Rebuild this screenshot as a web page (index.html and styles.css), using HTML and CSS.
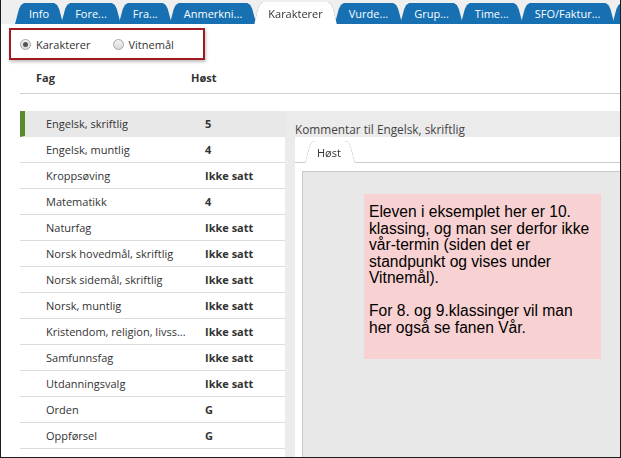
FILE: index.html
```html
<!DOCTYPE html>
<html lang="no">
<head>
<meta charset="utf-8">
<title>Karakterer</title>
<link rel="stylesheet" href="styles.css">
</head>
<body>
<div class="page">
  <ul class="tabs">
    <li class="tab"><a>Info</a></li>
    <li class="tab"><a>Fore...</a></li>
    <li class="tab"><a>Fra...</a></li>
    <li class="tab"><a>Anmerkni...</a></li>
    <li class="tab active"><a>Karakterer</a></li>
    <li class="tab"><a>Vurde...</a></li>
    <li class="tab"><a>Grup...</a></li>
    <li class="tab"><a>Time...</a></li>
    <li class="tab"><a>SFO/Faktur...</a></li>
    <li class="tab more"><a></a></li>
  </ul>

  <div class="modes">
    <label class="radio checked"><span class="dot"></span>Karakterer</label>
    <label class="radio"><span class="dot"></span>Vitnemål</label>
  </div>

  <div class="main">
    <div class="head">
      <span class="col-name">Fag</span>
      <span class="col-grade">Høst</span>
    </div>
    <div class="body">
      <ul class="subjects">
        <li class="row selected"><span class="name">Engelsk, skriftlig</span><span class="grade">5</span></li>
        <li class="row"><span class="name">Engelsk, muntlig</span><span class="grade">4</span></li>
        <li class="row"><span class="name">Kroppsøving</span><span class="grade">Ikke satt</span></li>
        <li class="row"><span class="name">Matematikk</span><span class="grade">4</span></li>
        <li class="row"><span class="name">Naturfag</span><span class="grade">Ikke satt</span></li>
        <li class="row"><span class="name">Norsk hovedmål, skriftlig</span><span class="grade">Ikke satt</span></li>
        <li class="row"><span class="name">Norsk sidemål, skriftlig</span><span class="grade">Ikke satt</span></li>
        <li class="row"><span class="name">Norsk, muntlig</span><span class="grade">Ikke satt</span></li>
        <li class="row"><span class="name">Kristendom, religion, livss...</span><span class="grade">Ikke satt</span></li>
        <li class="row"><span class="name">Samfunnsfag</span><span class="grade">Ikke satt</span></li>
        <li class="row"><span class="name">Utdanningsvalg</span><span class="grade">Ikke satt</span></li>
        <li class="row"><span class="name">Orden</span><span class="grade">G</span></li>
        <li class="row"><span class="name">Oppførsel</span><span class="grade">G</span></li>
        <li class="row"><span class="name"></span><span class="grade"></span></li>
      </ul>
      <section class="comment">
        <div class="comment-title">Kommentar til Engelsk, skriftlig</div>
        <div class="comment-box">
          <div class="subtabs"><div class="subtab"><span>Høst</span></div></div>
          <div class="comment-area">
            <div class="note">
              <p>Eleven i eksemplet her er 10.<br>klassing, og man ser derfor ikke<br>vår-termin (siden det er<br>standpunkt og vises under<br>Vitnemål).</p>
              <p>For 8. og 9.klassinger vil man<br>her også se fanen Vår.</p>
            </div>
          </div>
        </div>
      </section>
    </div>
  </div>
</div>
</body>
</html>
```

FILE: styles.css
```css
* {
  box-sizing: border-box;
  margin: 0;
  padding: 0;
}

html, body {
  width: 621px;
  height: 458px;
  overflow: hidden;
}

body {
  font-family: "Open Sans", "Liberation Sans", sans-serif;
  color: #333;
  background: #fff;
}

.page {
  width: 621px;
  height: 458px;
  border: 1px solid #1c1c1c;
  border-top: 0;
  display: flex;
  flex-direction: column;
  overflow: hidden;
}

/* top tab strip */
.tabs {
  flex: none;
  height: 24px;
  background: #efefef;
  display: flex;
  align-items: flex-end;
  padding-left: 14px;
  list-style: none;
  white-space: nowrap;
}

.tab {
  flex: none;
  margin-right: -2px;
}

.tab a {
  display: block;
  height: 21px;
  line-height: 21px;
  padding: 0 14px;
  font-size: 11px;
  color: #fff;
  background: #1670b2;
  clip-path: polygon(0 100%, 4px 6px, 6px 2px, 9px 0, calc(100% - 9px) 0, calc(100% - 6px) 2px, calc(100% - 4px) 6px, 100% 100%);
}

.tab.more a {
  width: 60px;
}

.tab.active {
  position: relative;
  z-index: 1;
  filter: drop-shadow(0 0 0.6px rgba(0, 0, 0, 0.55));
}

.tab.active a {
  height: 22px;
  line-height: 23px;
  background: #fff;
  color: #333;
}

/* radio group */
.modes {
  flex: none;
  margin: 4px 0 0 8px;
  width: 196px;
  height: 32px;
  border: 2px solid #a01a20;
  box-shadow: 1px 2px 3px rgba(0, 0, 0, 0.25);
  display: flex;
  align-items: center;
  padding-left: 9px;
  gap: 22px;
  font-size: 11px;
}

.radio {
  display: flex;
  align-items: center;
  gap: 5px;
}

.dot {
  width: 11px;
  height: 11px;
  border-radius: 50%;
  border: 1px solid #a8a8a8;
  background: linear-gradient(#f4f4f4, #d9d9d9);
  display: flex;
  align-items: center;
  justify-content: center;
}

.radio.checked .dot::after {
  content: "";
  width: 5px;
  height: 5px;
  border-radius: 50%;
  background: #555;
}

/* main table */
.main {
  flex: 1;
  margin-left: 19px;
  display: flex;
  flex-direction: column;
  min-height: 0;
}

.head {
  flex: none;
  height: 33px;
  margin-top: 1px;
  display: flex;
  align-items: center;
  font-size: 11px;
  font-weight: bold;
  border-bottom: 1px solid #cfcfcf;
}

.head .col-name {
  width: 171px;
  padding-left: 16px;
}

.body {
  flex: 1;
  margin-top: 17px;
  background: #ebebeb;
  display: flex;
  min-height: 0;
}

.subjects {
  flex: none;
  width: 265px;
  list-style: none;
  background: #fff;
}

.row {
  height: 26px;
  display: flex;
  align-items: center;
  border-bottom: 1px solid #dcdcdc;
  font-size: 11px;
  padding-left: 26px;
}

.row.selected {
  background: #e8e8e8;
  border-left: 5px solid #5a8a2c;
  padding-left: 21px;
  border-bottom-color: #e8e8e8;
}

.row .name {
  width: 159px;
  white-space: nowrap;
}

.row .grade {
  font-weight: bold;
}

/* comment panel */
.comment {
  flex: 1;
  padding-left: 10px;
  display: flex;
  flex-direction: column;
  min-width: 0;
}

.comment-title {
  flex: none;
  height: 26px;
  padding-top: 10px;
  line-height: 16px;
  font-size: 11.8px;
  color: #444;
}

.comment-box {
  flex: 1;
  background: #fff;
  display: flex;
  flex-direction: column;
}

.subtabs {
  flex: none;
  height: 26px;
  padding: 4px 0 0 10px;
  border-bottom: 1px solid #cdcdcd;
  display: flex;
  align-items: flex-end;
}

.subtab {
  margin-bottom: -1px;
  filter: drop-shadow(0 0 0.5px rgba(0, 0, 0, 0.6));
}

.subtab span {
  display: block;
  width: 50px;
  height: 22px;
  padding-left: 12px;
  line-height: 23px;
  font-size: 11px;
  background: #fff;
  clip-path: polygon(0 100%, 5px 4px, 7px 1px, 10px 0, calc(100% - 10px) 0, calc(100% - 7px) 1px, calc(100% - 5px) 4px, 100% 100%);
}

.comment-area {
  flex: 1;
  margin: 8px 0 0 7px;
  background: #e8e8e8;
  border-top: 1px solid #c9c9c9;
  border-left: 1px solid #c9c9c9;
  padding: 22px 0 0 61px;
}

.note {
  width: 237px;
  height: 165px;
  background: #f8d1d2;
  padding: 10px 2px 0 5px;
  font-family: "Liberation Sans", Arial, sans-serif;
  font-size: 15.6px;
  line-height: 16.5px;
  color: #000;
  white-space: nowrap;
}

.note p + p {
  margin-top: 16.5px;
}
```
